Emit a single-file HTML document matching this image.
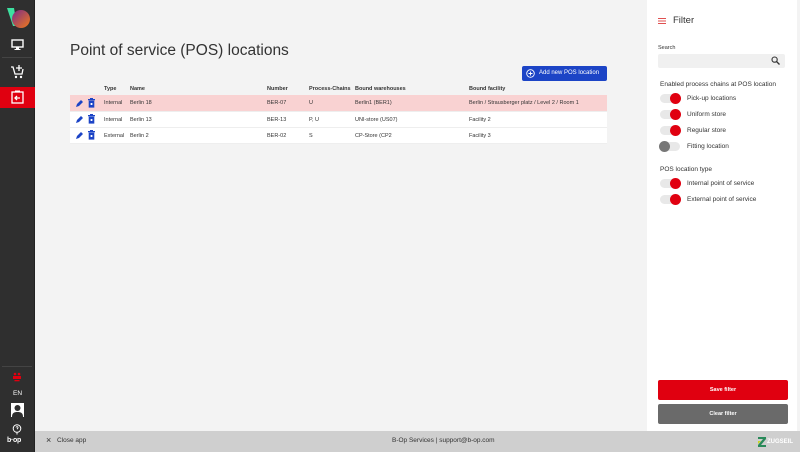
<!DOCTYPE html>
<html><head><meta charset="utf-8"><style>
*{box-sizing:border-box;margin:0;padding:0}
body{width:800px;height:452px;overflow:hidden;background:#f3f3f3;font-family:"Liberation Sans",sans-serif;position:relative;color:#222}
.sb{position:absolute;left:0;top:0;width:35px;height:452px;background:#2f2f2f;border-right:1px solid #222}
.ab{position:absolute}
.main{position:absolute;left:35px;top:0;width:612px;height:431px;background:#f3f3f3}
h1{position:absolute;left:70px;top:42px;font-size:15.5px;font-weight:normal;color:#333}
.btn{position:absolute;left:522px;top:66px;width:85px;height:15px;background:#1c44c6;border-radius:2px;color:#fff;font-size:6px;padding-left:17px}
.btn b{position:absolute;left:17px;top:4px;font-weight:normal}
.tbl{position:absolute;left:70px;top:82px;width:537px;font-size:5.5px;color:#333}
.hd{height:13px;position:relative;font-weight:bold}
.row{height:16px;position:relative;background:#fff;border-bottom:1px solid #eee}
.row.p{background:#f9d2d2;height:17px}
.tbl span{position:absolute;top:50%;transform:translateY(-50%)}
.rp{position:absolute;left:647px;top:0;width:150px;height:431px;background:#fff}
.ft{position:absolute;left:35px;top:431px;width:765px;height:21px;background:#cfcfcf;font-size:6.5px;color:#333}
.tg{position:absolute;left:660px;width:20px;height:9px;border-radius:5px;background:#e8e8e8}
.tg i{position:absolute;right:-1px;top:-1px;width:11px;height:11px;border-radius:50%;background:#e00010}
.tl{position:absolute;left:687px;font-size:6.5px;color:#333;margin-top:1px}
</style></head><body>
<div class="sb">
 <svg class="ab" style="left:5px;top:6px" width="26" height="24" viewBox="0 0 26 24"><defs><linearGradient id="g" x1="0" y1="0" x2="1" y2="1"><stop offset="0" stop-color="#7a2a8a"/><stop offset="1" stop-color="#f07a1a"/></linearGradient></defs><path d="M2 2 L9 2 L12 20 L8 20Z" fill="#3de0a0"/><circle cx="16" cy="13" r="9" fill="url(#g)"/></svg>
 <svg class="ab" style="left:11px;top:39px" width="13" height="12" viewBox="0 0 13 12"><rect x="1" y="1" width="11" height="7" fill="none" stroke="#fff" stroke-width="1.4"/><rect x="5" y="8" width="3" height="2" fill="#fff"/><rect x="3.5" y="10" width="6" height="1" fill="#fff"/></svg>
 <div class="ab" style="left:2px;top:57px;width:30px;height:1px;background:#444"></div>
 <svg class="ab" style="left:10px;top:64px" width="15" height="15" viewBox="0 0 15 15"><path d="M1 3h2l2 7h7l1-5" fill="none" stroke="#fff" stroke-width="1.3"/><path d="M9 1v6M6 4h6" stroke="#fff" stroke-width="1.3"/><circle cx="6" cy="13" r="1.2" fill="#fff"/><circle cx="11" cy="13" r="1.2" fill="#fff"/></svg>
 <div class="ab" style="left:0;top:87px;width:35px;height:21px;background:#e00010"></div>
 <svg class="ab" style="left:11px;top:90px" width="13" height="14" viewBox="0 0 13 14"><rect x="1" y="2" width="11" height="11" fill="none" stroke="#fff" stroke-width="1.3"/><rect x="4" y="0.5" width="5" height="2" fill="#fff"/><path d="M9 8H4M6 6L4 8l2 2" stroke="#fff" stroke-width="1.3" fill="none"/></svg>
 <div class="ab" style="left:2px;top:366px;width:30px;height:1px;background:#444"></div>
 <svg class="ab" style="left:12px;top:372px" width="10" height="10" viewBox="0 0 10 10"><circle cx="3" cy="2" r="1.3" fill="#e00010"/><circle cx="7" cy="2" r="1.3" fill="#e00010"/><rect x="1" y="4" width="8" height="3" fill="#e00010"/><rect x="2.5" y="8" width="5" height="1.3" fill="#e00010"/></svg>
 <div class="ab" style="left:0;top:390px;width:35px;text-align:center;color:#fff;font-size:6.5px">EN</div>
 <svg class="ab" style="left:11px;top:403px" width="13" height="14" viewBox="0 0 13 14"><rect width="13" height="14" fill="#fff"/><circle cx="6.5" cy="5" r="3" fill="#2f2f2f"/><path d="M1 14c0-4 2-5 5.5-5s5.5 1 5.5 5z" fill="#2f2f2f"/></svg>
 <svg class="ab" style="left:12px;top:424px" width="10" height="11" viewBox="0 0 10 11"><circle cx="5" cy="4.5" r="3.8" fill="none" stroke="#fff" stroke-width="1"/><path d="M5 8.5v2" stroke="#fff"/><path d="M4 3.5a1 1 0 1 1 1.5 1l-.5.8" fill="none" stroke="#fff" stroke-width=".9"/></svg>
 <div class="ab" style="left:7px;top:437px;color:#fff;font-size:7px;font-weight:bold;letter-spacing:-.3px">b·op</div>
</div>
<div class="main"></div>
<h1>Point of service (POS) locations</h1>
<div class="btn"><svg class="ab" style="left:4px;top:3px" width="9" height="9" viewBox="0 0 9 9"><circle cx="4.5" cy="4.5" r="3.8" fill="none" stroke="#fff" stroke-width=".9"/><path d="M4.5 2.5v4M2.5 4.5h4" stroke="#fff" stroke-width=".9"/></svg><b>Add new POS location</b></div>
<div class="tbl">
 <div class="hd"><span style="left:34px">Type</span><span style="left:60px">Name</span><span style="left:197px">Number</span><span style="left:239px">Process-Chains</span><span style="left:285px">Bound warehouses</span><span style="left:399px">Bound facility</span></div>
 <div class="row p"><svg class="ab" style="left:5px;top:4px" width="9" height="9" viewBox="0 0 9 9"><path d="M1 8l1-3 4-4 2 2-4 4z" fill="#1c44c6"/></svg><svg class="ab" style="left:18px;top:3px" width="7" height="10" viewBox="0 0 7 10"><rect x="0" y="1" width="7" height="1.3" fill="#1c44c6"/><rect x="2" y="0" width="3" height="1" fill="#1c44c6"/><rect x=".7" y="2.6" width="5.6" height="7" fill="#1c44c6"/><rect x="2.6" y="5" width="1.8" height="2" fill="#fff"/></svg><span style="left:34px">Internal</span><span style="left:60px">Berlin 18</span><span style="left:197px">BER-07</span><span style="left:239px">U</span><span style="left:285px">Berlin1 (BER1)</span><span style="left:399px">Berlin / Strausberger platz / Level 2 / Room 1</span></div>
 <div class="row"><svg class="ab" style="left:5px;top:3px" width="9" height="9" viewBox="0 0 9 9"><path d="M1 8l1-3 4-4 2 2-4 4z" fill="#1c44c6"/></svg><svg class="ab" style="left:18px;top:2px" width="7" height="10" viewBox="0 0 7 10"><rect x="0" y="1" width="7" height="1.3" fill="#1c44c6"/><rect x="2" y="0" width="3" height="1" fill="#1c44c6"/><rect x=".7" y="2.6" width="5.6" height="7" fill="#1c44c6"/><rect x="2.6" y="5" width="1.8" height="2" fill="#fff"/></svg><span style="left:34px">Internal</span><span style="left:60px">Berlin 13</span><span style="left:197px">BER-13</span><span style="left:239px">P, U</span><span style="left:285px">UNI-store (US07)</span><span style="left:399px">Facility 2</span></div>
 <div class="row"><svg class="ab" style="left:5px;top:3px" width="9" height="9" viewBox="0 0 9 9"><path d="M1 8l1-3 4-4 2 2-4 4z" fill="#1c44c6"/></svg><svg class="ab" style="left:18px;top:2px" width="7" height="10" viewBox="0 0 7 10"><rect x="0" y="1" width="7" height="1.3" fill="#1c44c6"/><rect x="2" y="0" width="3" height="1" fill="#1c44c6"/><rect x=".7" y="2.6" width="5.6" height="7" fill="#1c44c6"/><rect x="2.6" y="5" width="1.8" height="2" fill="#fff"/></svg><span style="left:34px">External</span><span style="left:60px">Berlin 2</span><span style="left:197px">BER-02</span><span style="left:239px">S</span><span style="left:285px">CP-Store (CP2</span><span style="left:399px">Facility 3</span></div>
</div>
<div class="rp"></div>
<svg class="ab" style="left:658px;top:18px" width="8" height="6" viewBox="0 0 8 6"><path d="M0 .5h8M0 3h8M0 5.5h8" stroke="#e05050" stroke-width="1"/></svg>
<div class="ab" style="left:673px;top:15px;font-size:9.5px;color:#333">Filter</div>
<div class="ab" style="left:658px;top:45px;font-size:5.5px;color:#333">Search</div>
<div class="ab" style="left:658px;top:54px;width:127px;height:14px;background:#f0f0f0;border-radius:2px"></div>
<svg class="ab" style="left:771px;top:56px" width="9" height="9" viewBox="0 0 9 9"><circle cx="3.6" cy="3.6" r="2.6" fill="none" stroke="#333" stroke-width="1.1"/><path d="M5.5 5.5L8.5 8.5" stroke="#333" stroke-width="1.3"/></svg>
<div class="ab" style="left:660px;top:81px;font-size:6.5px;color:#333">Enabled process chains at POS location</div>
<div class="tg" style="top:94px"><i></i></div><div class="tl" style="top:94px">Pick-up locations</div>
<div class="tg" style="top:110px"><i></i></div><div class="tl" style="top:110px">Uniform store</div>
<div class="tg" style="top:126px"><i></i></div><div class="tl" style="top:126px">Regular store</div>
<div class="tg" style="top:142px"><i style="left:-1px;background:#777"></i></div><div class="tl" style="top:142px">Fitting location</div>
<div class="ab" style="left:660px;top:166px;font-size:6.5px;color:#333">POS location type</div>
<div class="tg" style="top:179px"><i></i></div><div class="tl" style="top:179px">Internal point of service</div>
<div class="tg" style="top:195px"><i></i></div><div class="tl" style="top:195px">External point of service</div>
<div class="ab" style="left:658px;top:380px;width:130px;height:20px;background:#e00010;border-radius:2px;color:#fff;font-size:5.5px;font-weight:bold;text-align:center;line-height:20px">Save filter</div>
<div class="ab" style="left:658px;top:404px;width:130px;height:20px;background:#6a6a6a;border-radius:2px;color:#fff;font-size:5.5px;font-weight:bold;text-align:center;line-height:20px">Clear filter</div>
<div class="ft">
 <span class="ab" style="left:11px;top:5px;font-size:9px;line-height:9px">×</span>
 <span class="ab" style="left:22px;top:6px">Close app</span>
 <span class="ab" style="left:357px;top:6px">B-Op Services | support@b-op.com</span>
 <svg class="ab" style="left:723px;top:6px" width="8" height="10" viewBox="0 0 8 10"><path d="M0 0h8v2L3 8h5v2H0V8l5-6H0z" fill="#2a8a5a"/><path d="M0 4h3l-3 3z" fill="#c8d820"/></svg>
 <span class="ab" style="left:732px;top:8px;color:#fff;font-weight:bold;font-size:6px">ZUGSEIL</span>
</div>
</body></html>
